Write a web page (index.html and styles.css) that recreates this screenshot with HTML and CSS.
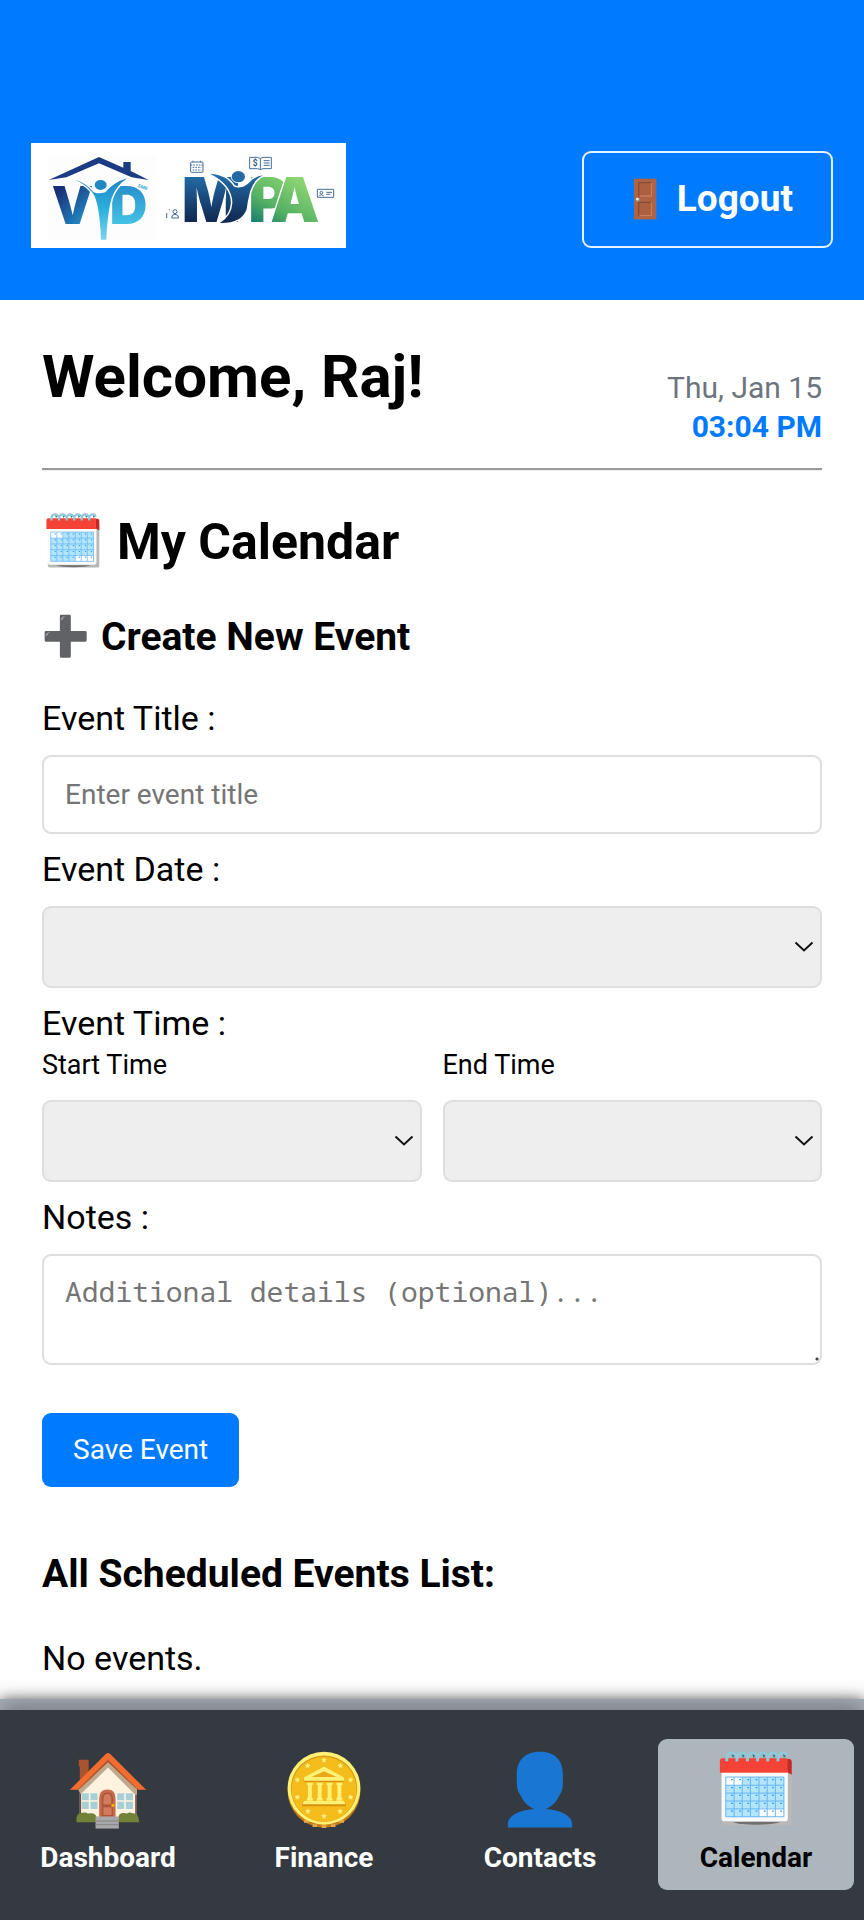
FILE: index.html
```html
<!doctype html>
<html lang="en">
<head>
    <meta charset="UTF-8">
    <meta name="viewport" content="width=device-width, initial-scale=1.0">
    <link rel="stylesheet" href="styles.css">
    <title>My Calendar</title>
</head>
<body>
<svg class="sprite" aria-hidden="true">
    <symbol id="calendar" viewBox="-8 0 256 240">
        <path d="M215 50h14v170q0 6-6 6H24q-9-2-9-14z" fill="#b8b8b8"/>
        <path d="M50 216h144q-20 8-72 8t-72-8z" fill="#707070"/>
        <path d="M15 55h202v150q0 9-9 9H24q-9 0-9-9z" fill="#fafafa"/>
        <path d="M215 24h8q6 2 6 8v40l-14-8z" fill="#c62828"/>
        <path d="M10 30q0-8 8-8h197v44H10z" fill="#f44336"/>
        <path d="M28 79h177v121H28z" fill="#b3e5fc"/>
        <path d="M28 79h50v25H28zM129 175h76v25h-76z" fill="#fff"/>
        <path d="M28 79h177v121H28zM53 79v121M78 79v121M103 79v121M129 79v121M154 79v121M179 79v121M28 104h177M28 128h177M28 152h177M28 176h177" fill="none" stroke="#64b5f6" stroke-width="3"/>
        <path d="M44 87h155M44 111h155M44 135h155M44 159h155M44 183h155" stroke="#2196f3" stroke-width="4" stroke-dasharray="5 20"/>
        <path d="M31 31q-2-23 12-25t14 9M62 31q-2-23 12-25t14 9M94 31q-2-23 12-25t14 9M125 31q-2-23 12-25t14 9M156 31q-2-23 12-25t14 9M187 31q-2-23 12-25t14 9" fill="none" stroke="#90cad8" stroke-width="9"/>
        <path d="M46 9l9 5-6 7zM77 9l9 5-6 7zM109 9l9 5-6 7zM140 9l9 5-6 7zM171 9l9 5-6 7zM202 9l9 5-6 7z" fill="#2f7889"/>
    </symbol>
    <symbol id="plus" viewBox="0 0 148 138">
        <path d="M54 6q0-4 4-4h25q4 0 4 4v45h44q4 0 4 4v24q0 4-4 4H87v45q0 4-4 4H58q-4 0-4-4V83H12q-4 0-4-4V55q0-4 4-4h42z" fill="#616266"/>
        <path d="M57 19q1-13 13-13-7 3-8 10zM11 67q1-12 14-12-8 3-9 9z" fill="#aaa"/>
    </symbol>
    <symbol id="door" viewBox="0 0 138 126">
        <path d="M36 2h67v122H36z" fill="#af6343"/>
        <path d="M50 14h38v40H50zM50 73h38v40H50z" fill="#ad6040" stroke="#844b38" stroke-width="4"/>
        <path d="M88 14v40H52M88 73v40H52" fill="none" stroke="#c8815f" stroke-width="4"/>
        <circle cx="47" cy="65" r="6" fill="#999"/>
        <circle cx="46" cy="63" r="4" fill="#eee"/>
    </symbol>
    <symbol id="house" viewBox="-8 0 256 240">
        <path d="M31 26h30v60l-27 24V46h-3z" fill="#a9532f"/>
        <path d="M34 100L120 30l88 72v100H34z" fill="#fff3e0"/>
        <path d="M34 128h4v66h-4zM203 128h5v66h-5z" fill="#6d4c41"/>
        <path d="M120 28l88 86v20h-4L120 50 38 130l-8-10v-8z" fill="#bfa98f"/>
        <path d="M120 20l104 98-18-3-86-81-86 81-18 3z" fill="#a95430"/>
        <path d="M4 118L114 8q6-5 12 0l110 110h-24L120 26 27 118z" fill="#f26c30"/>
        <path d="M40 128h48v48H40zM148 128h48v48h-48z" fill="#a6cfd6"/>
        <path d="M64 128v48M40 152h48M172 128v48M148 152h48" stroke="#fff3e0" stroke-width="5"/>
        <path d="M93 202v-58q0-27 25-27t25 27v58z" fill="#c8694b"/>
        <path d="M101 200v-54q0-20 17-20t17 20v54z" fill="#a9553b"/>
        <path d="M106 163v-17q0-15 12-15t12 15v17zM106 171h25v24h-25z" fill="#d17c5d"/>
        <circle cx="135" cy="165" r="5" fill="#ffb300"/>
        <path d="M24 217q-4-29 18-29 11-3 16 2 27-5 27 14v13zM152 217v-13q0-20 26-14 6-5 17-1 20-1 20 28z" fill="#728238"/>
        <path d="M82 199h71v37H82z" fill="#a8a8a8"/>
        <path d="M82 213h71M82 224h71" stroke="#858585" stroke-width="3"/>
    </symbol>
    <symbol id="coin" viewBox="-8 0 256 240">
        <circle cx="120" cy="122" r="111" fill="#c57b13"/>
        <path d="M120 226v8M92 223v8M148 223v8M66 210v8M174 210v8" stroke="#e7a64d" stroke-width="14"/>
        <circle cx="120" cy="113" r="111" fill="#fff176"/>
        <circle cx="120" cy="114" r="101" fill="#d99416"/>
        <circle cx="120" cy="116" r="99" fill="#f4bd1b"/>
        <path d="M58 85h122v9H58zM53 160h134v8H53z" fill="#d8910f"/>
        <path d="M120 47l61 33v10H59V80zM60 152h120l6 10H54z" fill="#fff176"/>
        <path d="M120 61l38 18H82z" fill="#e8a817"/>
        <path d="M68 96h18v7h-3v40h3v8H68v-8h3v-40h-3zM98 96h18v7h-3v40h3v8H98v-8h3v-40h-3zM128 96h18v7h-3v40h3v8h-18v-8h3v-40h-3zM158 96h18v7h-3v40h3v8h-18v-8h3v-40h-3z" fill="#fff176"/>
        <g fill="#fff176" stroke="#dda01a" stroke-width="1">
            <path id="star" d="M120 16l3 7 8 1-6 5 2 8-7-4-7 4 2-8-6-5 8-1z"/>
            <use href="#star" x="-50" y="17"/><use href="#star" x="50" y="17"/>
            <use href="#star" x="-81" y="60"/><use href="#star" x="81" y="60"/>
            <use href="#star" x="-81" y="113"/><use href="#star" x="81" y="113"/>
            <use href="#star" x="-49" y="156"/><use href="#star" x="49" y="156"/>
            <use href="#star" y="171"/>
        </g>
    </symbol>
    <symbol id="person" viewBox="-8 0 256 240">
        <path d="M120 2c50 0 70 30 70 72 0 30 0 48-10 59-9 20-22 36-42 43 40 3 80 18 80 46v11H22v-11c0-28 40-43 80-46-20-7-33-23-42-43-10-11-11-29-11-59C49 32 70 2 120 2z" fill="#1976d2"/>
    </symbol>
</svg>

<header class="header">
    <svg class="logo" viewBox="0 0 945 315" role="img" aria-label="VYD MYPA">
        <defs>
            <linearGradient id="navy" gradientUnits="userSpaceOnUse" x1="60" y1="130" x2="180" y2="250">
                <stop offset="0.15" stop-color="#182f76"/>
                <stop offset="1" stop-color="#259ed8"/>
            </linearGradient>
            <linearGradient id="sky" gradientUnits="userSpaceOnUse" x1="0" y1="130" x2="0" y2="243">
                <stop offset="0" stop-color="#2790cd"/>
                <stop offset="1" stop-color="#43c3e4"/>
            </linearGradient>
            <linearGradient id="body" x1="0" y1="0" x2="0" y2="1">
                <stop offset="0" stop-color="#2185c6"/>
                <stop offset="0.5" stop-color="#2cb0dc"/>
                <stop offset="1" stop-color="#7cd2ec"/>
            </linearGradient>
            <linearGradient id="deep" gradientUnits="userSpaceOnUse" x1="0" y1="95" x2="0" y2="240">
                <stop offset="0" stop-color="#236da8"/>
                <stop offset="1" stop-color="#10264f"/>
            </linearGradient>
            <linearGradient id="leaf" gradientUnits="userSpaceOnUse" x1="780" y1="95" x2="690" y2="250">
                <stop offset="0" stop-color="#8cd573"/>
                <stop offset="0.6" stop-color="#55b163"/>
                <stop offset="1" stop-color="#197f6e"/>
            </linearGradient>
        </defs>
        <rect width="945" height="315" fill="#fff"/>
        <rect x="50" y="37" width="324" height="254" fill="#fdfdfd"/>

        <path d="M53 111L204 42l73 32V57h22v27l54 27-51-8-98-42-98 42z" fill="#1b3b83"/>
        <text class="logo-letter" x="62 236" y="243" font-size="156"><tspan fill="url(#navy)">V</tspan><tspan fill="url(#sky)">D</tspan></text>
        <path d="M132 110q33 9 56 38 13 6 35 0 26-31 65-42-34 25-45 57-13 40-17 127h-16q-4-95-19-130-14-30-59-50z" fill="url(#body)" stroke="#fff" stroke-width="9" paint-order="stroke"/>
        <ellipse cx="209" cy="126" rx="18" ry="15" fill="#2188c5" stroke="#fff" stroke-width="6" paint-order="stroke"/>
        <text class="logo-small" transform="translate(320 132) rotate(20)" font-size="14" fill="#2ea6d3">EMR</text>

        <text class="logo-letter" x="452 652 718" y="238" font-size="186"><tspan fill="url(#deep)">M</tspan><tspan fill="url(#leaf)">P</tspan><tspan class="logo-front" fill="url(#leaf)">A</tspan></text>
        <path d="M537 92q52 4 71 38 19 10 43-8 20-23 45-25-27 12-39 49-7 28-10 52-14 43-80 42 35-22 37-59 1-55-67-89z" fill="url(#deep)" stroke="#fff" stroke-width="9" paint-order="stroke"/>
        <ellipse cx="622" cy="101" rx="20" ry="17" fill="#216ba2" stroke="#fff" stroke-width="5" paint-order="stroke"/>

        <g fill="none" stroke="#476e99" stroke-width="3">
            <rect x="479" y="57" width="37" height="31" rx="3"/>
            <path d="M479 66h37M486 53v7M508 53v7M485 73h26M485 81h26" stroke-dasharray="5 3"/>
            <path d="M688 80l-8-3h-24V43h24l8 4 8-4h25v34h-25zM688 47v33M698 53h18M698 60h18M698 67h18"/>
            <path d="M859 139h49v24h-49zM886 148h17M886 154h12M864 160q7-10 14 0"/>
            <circle cx="871" cy="149" r="4"/>
            <circle cx="432" cy="206" r="6"/>
            <path d="M422 225q0-11 10-11t11 11zM407 210v15M415 199v3"/>
        </g>
        <text class="logo-small" x="665" y="70" font-size="25" fill="#31577f">$</text>
    </svg>
    <button class="logout" type="button">
        <svg class="logout-icon" aria-hidden="true"><use href="#door"/></svg>
        Logout
    </button>
</header>

<main class="content">
    <div class="welcome">
        <h1>Welcome, Raj!</h1>
        <div class="clock">
            <div class="date">Thu, Jan 15</div>
            <div class="time">03:04 PM</div>
        </div>
    </div>
    <hr>
    <h2><svg class="title-icon" aria-hidden="true"><use href="#calendar"/></svg>My Calendar</h2>
    <h3><svg class="plus-icon" aria-hidden="true"><use href="#plus"/></svg>Create New Event</h3>

    <form class="event-form">
        <label for="title">Event Title :</label>
        <input class="field" id="title" type="text" placeholder="Enter event title">

        <label for="date">Event Date :</label>
        <select class="field" id="date"><option></option></select>

        <div class="group-label">Event Time :</div>
        <div class="times">
            <div class="time-box">
                <label class="small" for="start">Start Time</label>
                <select class="field" id="start"><option></option></select>
            </div>
            <div class="time-box">
                <label class="small" for="end">End Time</label>
                <select class="field" id="end"><option></option></select>
            </div>
        </div>

        <label for="notes">Notes :</label>
        <textarea class="field" id="notes" placeholder="Additional details (optional)..."></textarea>

        <button class="save" type="submit">Save Event</button>
    </form>

    <h3 class="list-title">All Scheduled Events List:</h3>
    <p class="empty">No events.</p>
</main>

<footer class="footer">
    <nav class="nav">
        <a class="nav-item" href="#dashboard">
            <svg class="nav-icon" aria-hidden="true"><use href="#house"/></svg>
            Dashboard
        </a>
        <a class="nav-item" href="#finance">
            <svg class="nav-icon" aria-hidden="true"><use href="#coin"/></svg>
            Finance
        </a>
        <a class="nav-item" href="#contacts">
            <svg class="nav-icon" aria-hidden="true"><use href="#person"/></svg>
            Contacts
        </a>
        <a class="nav-item active" href="#my-calendar">
            <svg class="nav-icon" aria-hidden="true"><use href="#calendar"/></svg>
            Calendar
        </a>
    </nav>
</footer>
</body>
</html>
```
FILE: styles.css
```css
* {
    box-sizing: border-box;
}

body {
    display: flex;
    flex-direction: column;
    min-height: 100vh;
    margin: 0;
    background: #fff;
    color: #000;
    font-family: Roboto, sans-serif;
    font-size: 34px;
    line-height: 40px;
}

.sprite {
    display: none;
}

.header {
    display: flex;
    justify-content: space-between;
    align-items: flex-end;
    padding: 143px 31px 52px;
    background: #007bff;
}

.logo {
    width: 315px;
    height: 105px;
}

.logo-letter {
    font-family: Inter, sans-serif;
    font-weight: 900;
}

.logo-front {
    stroke: #fff;
    stroke-width: 8px;
    paint-order: stroke;
}

.logo-small {
    font-family: Roboto, sans-serif;
    font-weight: 700;
}

.logout {
    display: flex;
    align-items: center;
    gap: 9px;
    padding: 23px 38px 25px;
    border: 2px solid #e6f2ff;
    border-radius: 9px;
    background: #007bff;
    color: #fff;
    font: 700 37px/45px Roboto, sans-serif;
    cursor: pointer;
}

.logout-icon {
    width: 46px;
    height: 42px;
}

.content {
    padding: 42px 42px 20px;
}

.welcome {
    display: flex;
    justify-content: space-between;
    height: 104px;
}

h1, h2, h3 {
    margin: 0;
    font-weight: 700;
}

h1 {
    font-size: 60px;
    line-height: 70px;
}

h2 {
    display: flex;
    align-items: center;
    gap: 13px;
    font-size: 50px;
    line-height: 60px;
}

h3 {
    display: flex;
    align-items: center;
    gap: 10px;
    margin-top: 42px;
    font-size: 39px;
    line-height: 46px;
}

hr {
    margin: 22px 0 41px;
    border: 0;
    border-top: 2px solid #9a9a9a;
    border-bottom: 1px solid #eee;
}

.clock {
    align-self: flex-end;
    font-size: 30px;
    line-height: 39px;
    text-align: right;
}

.date {
    color: #6c757d;
}

.time {
    color: #007bff;
    font-weight: 700;
}

.title-icon {
    width: 62px;
    height: 58px;
}

.plus-icon {
    width: 49px;
    height: 46px;
}

.event-form {
    margin-top: 38px;
}

label {
    display: block;
}

.field {
    display: block;
    width: 100%;
    height: 82px;
    margin: 17px 0 15px;
    padding: 0 21px;
    border: 2px solid #dedede;
    border-radius: 9px;
    background: #fff;
    font: 28px/34px Roboto, sans-serif;
}

.field::placeholder {
    color: #757575;
}

input.field {
    height: 79px;
}

select.field {
    appearance: none;
    background: #eee url("data:image/svg+xml,%3Csvg xmlns='http://www.w3.org/2000/svg' width='20' height='12'%3E%3Cpath d='M1.5 1.5L10 9.5L18.5 1.5' fill='none' stroke='%23111' stroke-width='2'/%3E%3C/svg%3E") no-repeat right 6px center;
}

textarea.field {
    height: 111px;
    padding: 18px 21px;
    background: radial-gradient(circle at 2px 2px, #444 1px, transparent 2px) no-repeat right 1px bottom 2px / 4px 4px;
    font-family: "Noto Sans Mono", "DejaVu Sans Mono", monospace;
    resize: none;
}

.times {
    display: grid;
    grid-template-columns: 1fr 1fr;
    gap: 21px;
    margin-top: 4px;
}

.small {
    font-size: 27px;
    line-height: 36px;
}

.save {
    margin-top: 33px;
    padding: 20px 31px;
    border: 0;
    border-radius: 9px;
    background: #007bff;
    color: #fff;
    font: 28px/34px Roboto, sans-serif;
    cursor: pointer;
}

.list-title {
    margin-top: 64px;
}

.empty {
    margin: 41px 0 0;
}

.footer {
    margin-top: auto;
    padding-top: 11px;
    background: #adb5bd;
    box-shadow: 0 0 12px rgba(0, 0, 0, .5);
}

.nav {
    display: grid;
    grid-template-columns: repeat(4, 1fr);
    padding: 29px 0 30px;
    background: #343a40;
    box-shadow: 0 -8px 21px rgba(0, 0, 0, .3);
}

.nav-item {
    display: flex;
    flex-direction: column;
    align-items: center;
    gap: 8px;
    margin: 0 10px;
    padding: 12px 0;
    border-radius: 9px;
    color: #fff;
    font-size: 28px;
    font-weight: 700;
    text-decoration: none;
}

.nav-item.active {
    background: #adb5bd;
    color: #000;
}

.nav-icon {
    width: 84px;
    height: 79px;
}
```
